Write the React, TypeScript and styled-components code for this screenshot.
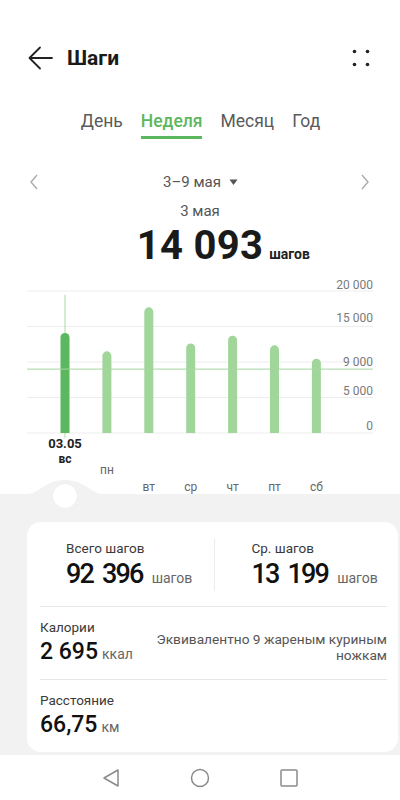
import React from "react";
import styled, { createGlobalStyle } from "styled-components";

const green = "#5cb85f";
const lightGreen = "#a1d69b";

const days = [
  { label: "вс", value: 14093, y: 185 },
  { label: "пн", value: 11500, y: 196 },
  { label: "вт", value: 17700, y: 213 },
  { label: "ср", value: 12600, y: 213 },
  { label: "чт", value: 13700, y: 213 },
  { label: "пт", value: 12350, y: 213 },
  { label: "сб", value: 10450, y: 213 },
];

const tabs = ["День", "Неделя", "Месяц", "Год"];

// chart geometry (svg coords, chart starts at page y 278)
const zeroY = 155;
const perUnit = 142 / 20000;
const valueY = (v: number) => zeroY - v * perUnit;
const barX = (i: number) => 65 + i * 41.9;

const GlobalStyle = createGlobalStyle`
  body {
    margin: 0;
    font-family: Roboto, "Noto Sans", sans-serif;
    background: #fff;
  }
`;

const App: React.FC = () => {
  return (
    <Page>
      <GlobalStyle />
      <Header>
        <HeaderLeft>
          <svg width="26" height="26" viewBox="0 0 26 26">
            <path
              d="M25 13 H3 M13 2.5 L2.5 13 L13 23.5"
              fill="none"
              stroke="#222"
              strokeWidth="1.8"
              strokeLinecap="round"
              strokeLinejoin="round"
            />
          </svg>
          <Title>Шаги</Title>
        </HeaderLeft>
        <svg width="20" height="20" viewBox="0 0 20 20">
          <circle cx="3.5" cy="3.5" r="1.8" fill="#222" />
          <circle cx="16.5" cy="3.5" r="1.8" fill="#222" />
          <circle cx="3.5" cy="16.5" r="1.8" fill="#222" />
          <circle cx="16.5" cy="16.5" r="1.8" fill="#222" />
        </svg>
      </Header>

      <Tabs>
        {tabs.map((t) => (
          <Tab key={t} active={t === "Неделя"}>
            {t}
          </Tab>
        ))}
      </Tabs>

      <DateRow>
        <svg width="10" height="16" viewBox="0 0 10 16">
          <path d="M8 1 L2 8 L8 15" fill="none" stroke="#aaa" strokeWidth="1.4" />
        </svg>
        <DateLabel>
          3–9 мая
          <svg width="9" height="7" viewBox="0 0 9 7">
            <path d="M0.5 0.5 H8.5 L4.5 6 Z" fill="#555" />
          </svg>
        </DateLabel>
        <svg width="10" height="16" viewBox="0 0 10 16">
          <path d="M2 1 L8 8 L2 15" fill="none" stroke="#aaa" strokeWidth="1.4" />
        </svg>
      </DateRow>

      <DayLabel>3 мая</DayLabel>

      <TotalRow>
        <span />
        <TotalValue>14 093</TotalValue>
        <TotalUnit>шагов</TotalUnit>
      </TotalRow>

      <Chart>
        <svg width="400" height="216" viewBox="0 0 400 216">
          {[0, 5000, 10000, 15000, 20000].map((v) => (
            <line
              key={v}
              x1="27"
              x2="373"
              y1={valueY(v)}
              y2={valueY(v)}
              stroke="#ededed"
              strokeWidth="1"
            />
          ))}
          <line x1="65" x2="65" y1="17" y2="160" stroke="#a9d9a3" strokeWidth="1" />
          {days.map((d, i) => {
            const x = barX(i);
            const top = valueY(d.value);
            return (
              <path
                key={d.label}
                d={`M${x - 4.5} ${zeroY} V${top + 4.5} A4.5 4.5 0 0 1 ${x + 4.5} ${top + 4.5} V${zeroY} Z`}
                fill={i === 0 ? green : lightGreen}
              />
            );
          })}
          <line x1="27" x2="373" y1={valueY(9000)} y2={valueY(9000)} stroke="#a5d6a0" strokeWidth="1" />
          <AxisText x="373" y="11">20 000</AxisText>
          <AxisText x="373" y="44">15 000</AxisText>
          <AxisText x="373" y="88" fill="#8fcb8a">9 000</AxisText>
          <AxisText x="373" y="117">5 000</AxisText>
          <AxisText x="373" y="152">0</AxisText>
          <DateTick x="65" y="170">03.05</DateTick>
          {days.map((d, i) => (
            <WeekdayText key={d.label} x={barX(i)} y={d.y} selected={i === 0}>
              {d.label}
            </WeekdayText>
          ))}
        </svg>
      </Chart>

      <Summary>
        <Hill width="86" height="17" viewBox="0 0 86 17">
          <path d="M0 17 C18 17 22 2 43 2 C64 2 68 17 86 17 Z" fill="#f2f2f2" />
        </Hill>
        <Knob />
        <Card>
          <TopStats>
            <StatCol>
              <StatLabel>Всего шагов</StatLabel>
              <StatLine>
                <BigNumber>92 396</BigNumber>
                <Unit>шагов</Unit>
              </StatLine>
            </StatCol>
            <StatCol divided>
              <StatLabel>Ср. шагов</StatLabel>
              <StatLine>
                <BigNumber>13 199</BigNumber>
                <Unit>шагов</Unit>
              </StatLine>
            </StatCol>
          </TopStats>
          <Row>
            <div>
              <StatLabel>Калории</StatLabel>
              <StatLine>
                <MidNumber>2 695</MidNumber>
                <Unit>ккал</Unit>
              </StatLine>
            </div>
            <Note>Эквивалентно 9 жареным куриным ножкам</Note>
          </Row>
          <Row last>
            <div>
              <StatLabel>Расстояние</StatLabel>
              <StatLine>
                <MidNumber>66,75</MidNumber>
                <Unit>км</Unit>
              </StatLine>
            </div>
          </Row>
        </Card>
      </Summary>

      <NavBar>
        <svg width="20" height="20" viewBox="0 0 20 20">
          <path d="M17 2 L3 10 L17 18 Z" fill="none" stroke="#8a8a8a" strokeWidth="1.5" strokeLinejoin="round" />
        </svg>
        <svg width="20" height="20" viewBox="0 0 20 20">
          <circle cx="10" cy="10" r="8.5" fill="none" stroke="#8a8a8a" strokeWidth="1.5" />
        </svg>
        <svg width="20" height="20" viewBox="0 0 20 20">
          <rect x="2" y="2" width="16" height="16" rx="1" fill="none" stroke="#8a8a8a" strokeWidth="1.5" />
        </svg>
      </NavBar>
    </Page>
  );
};

export default App;

const Page = styled.div`
  width: 400px;
  height: 800px;
  display: flex;
  flex-direction: column;
  overflow: hidden;
  background: #fff;
`;

const Header = styled.div`
  height: 48px;
  margin-top: 34px;
  padding: 0 29px 0 27px;
  display: flex;
  align-items: center;
  justify-content: space-between;
`;

const HeaderLeft = styled.div`
  display: flex;
  align-items: center;
  gap: 14px;
`;

const Title = styled.div`
  font-size: 21px;
  font-weight: 700;
  color: #1a1a1a;
`;

const Tabs = styled.div`
  margin-top: 27px;
  display: flex;
  justify-content: center;
  gap: 18px;
  padding-left: 1px;
`;

const Tab = styled.div<{ active?: boolean }>`
  font-size: 17.5px;
  line-height: 24px;
  padding-bottom: 3px;
  border-bottom: 3px solid ${(p) => (p.active ? green : "transparent")};
  color: ${(p) => (p.active ? green : "#5a5a5a")};
  font-weight: ${(p) => (p.active ? 500 : 400)};
`;

const DateRow = styled.div`
  margin-top: 31px;
  height: 24px;
  padding: 0 30px 0 29px;
  display: flex;
  align-items: center;
  justify-content: space-between;
`;

const DateLabel = styled.div`
  display: flex;
  align-items: center;
  gap: 8px;
  font-size: 15px;
  color: #555;
  margin-left: 2px;
`;

const DayLabel = styled.div`
  margin-top: 7px;
  height: 20px;
  line-height: 20px;
  text-align: center;
  font-size: 15px;
  color: #555;
`;

const TotalRow = styled.div`
  margin-top: 3px;
  height: 44px;
  display: grid;
  grid-template-columns: 1fr auto 1fr;
  align-items: baseline;
  column-gap: 6px;
`;

const TotalValue = styled.div`
  font-size: 40px;
  line-height: 44px;
  font-weight: 700;
  color: #1a1a1a;
  letter-spacing: 0.3px;
`;

const TotalUnit = styled.div`
  font-size: 14px;
  font-weight: 700;
  color: #222;
`;

const Chart = styled.div`
  margin-top: 10px;
  height: 216px;
  svg {
    display: block;
  }
`;

const AxisText = styled.text`
  font-size: 12px;
  fill: #7a7a7a;
  text-anchor: end;
`;

const DateTick = styled.text`
  font-size: 13px;
  font-weight: 700;
  fill: #222;
  text-anchor: middle;
`;

const WeekdayText = styled.text<{ selected?: boolean }>`
  font-size: 12px;
  font-weight: ${(p) => (p.selected ? 700 : 400)};
  fill: ${(p) => (p.selected ? "#222" : "#666")};
  text-anchor: middle;
`;

const Summary = styled.div`
  position: relative;
  flex: 1;
  background: #f2f2f2;
  padding: 28px 2px 3px 27px;
`;

const Hill = styled.svg`
  position: absolute;
  left: 22px;
  top: -16px;
`;

const Knob = styled.div`
  position: absolute;
  left: 53px;
  top: -10px;
  width: 24px;
  height: 24px;
  border-radius: 50%;
  background: #fff;
  box-shadow: 0 0 1px rgba(0, 0, 0, 0.08);
`;

const Card = styled.div`
  height: 230px;
  box-sizing: border-box;
  background: #fff;
  border-radius: 14px;
  padding: 0 11px 0 13px;
  display: flex;
  flex-direction: column;
`;

const TopStats = styled.div`
  height: 84px;
  display: grid;
  grid-template-columns: 1fr 1fr;
  align-items: center;
  border-bottom: 1px solid #e6e6e6;
`;

const StatCol = styled.div<{ divided?: boolean }>`
  padding-left: ${(p) => (p.divided ? 37 : 26)}px;
  border-left: ${(p) => (p.divided ? "1px solid #ececec" : "none")};
  margin-top: 1px;
`;

const StatLabel = styled.div`
  font-size: 13.5px;
  line-height: 18px;
  color: #3a3a3a;
`;

const StatLine = styled.div`
  display: flex;
  align-items: baseline;
  gap: 4px;
`;

const BigNumber = styled.span`
  font-size: 27px;
  line-height: 34px;
  font-weight: 500;
  letter-spacing: -1.8px;
  word-spacing: 4px;
  margin-right: 5px;
  color: #111;
`;

const MidNumber = styled.span`
  font-size: 23px;
  line-height: 32px;
  font-weight: 500;
  color: #111;
`;

const Unit = styled.span`
  font-size: 14px;
  color: #666;
`;

const Row = styled.div<{ last?: boolean }>`
  height: 72px;
  display: flex;
  align-items: center;
  justify-content: space-between;
  border-bottom: ${(p) => (p.last ? "none" : "1px solid #e6e6e6")};
`;

const Note = styled.div`
  width: 240px;
  text-align: right;
  font-size: 13.7px;
  line-height: 16px;
  color: #555;
  margin-top: 8px;
`;

const NavBar = styled.div`
  height: 45px;
  display: flex;
  align-items: center;
  justify-content: center;
  gap: 69px;
  background: #fff;
`;
